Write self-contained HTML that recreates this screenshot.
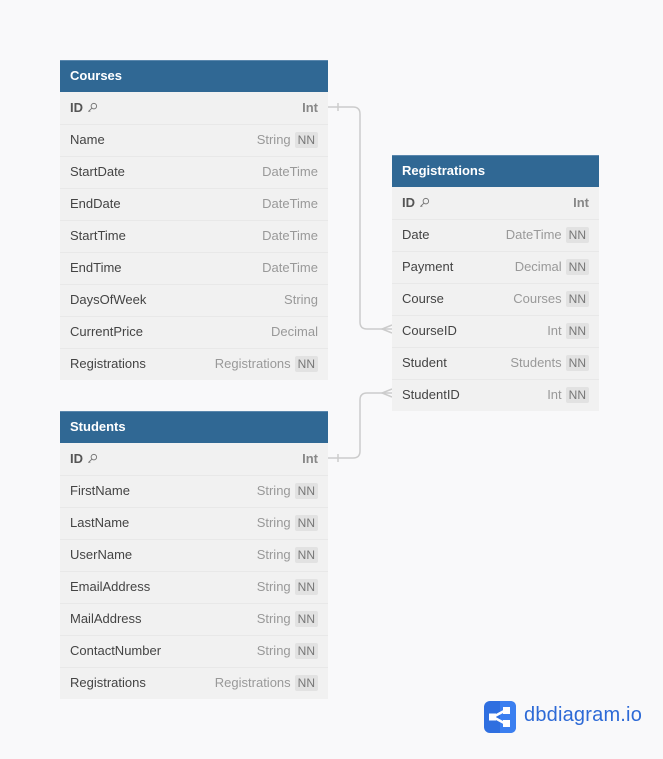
<!DOCTYPE html>
<html><head><meta charset="utf-8"><style>
body{margin:0;width:663px;height:759px;background:#f9f9fa;font-family:"Liberation Sans",sans-serif;position:relative;overflow:hidden}
.t{position:absolute;background:#f1f1f1}
.h{height:32px;background:#306894;color:#fff;font-weight:bold;font-size:13px;line-height:30px;padding-left:10px;box-sizing:border-box;border-top:1px solid #5a87ad}
.r{height:32px;border-top:1px solid #e8e8e8;box-sizing:border-box;display:flex;align-items:center;padding:0 10px 2px;font-size:13px;color:#444}
.h+.r{border-top:none}
.n{flex:1;display:flex;align-items:center}
.ty{color:#999}
.b{font-weight:bold;color:#555}
.nn{background:#e2e2e2;color:#777;padding:1px 3px;margin-left:4px;border-radius:2px;font-size:12px}
.k{margin-left:4px}
</style></head><body>
<svg width="663" height="759" style="position:absolute;left:0;top:0" fill="none" stroke="#ccc" stroke-width="1.5">
<path d="M328 107 H353 Q360 107 360 114 V322 Q360 329 367 329 H392"/>
<path d="M338 103 V111"/>
<path d="M392 325 L382 329 L392 333"/>
<path d="M328 458 H353 Q360 458 360 451 V400 Q360 393 367 393 H392"/>
<path d="M338 454 V462"/>
<path d="M392 389 L382 393 L392 397"/>
</svg>
<svg width="0" height="0" style="position:absolute"><defs><symbol id="key" viewBox="0 0 12 12"><circle cx="7.5" cy="4.5" r="3" fill="none" stroke="#777" stroke-width="1"/><path d="M5.3 6.7 L1.5 10.5 M2.5 9.5 L3.5 10.5" stroke="#777" stroke-width="1" fill="none"/></symbol></defs></svg>
<div class="t" style="left:60px;top:60px;width:268px">
<div class="h">Courses</div>
<div class="r"><span class="n b">ID<svg class="k" width="11" height="11"><use href="#key"/></svg></span><span class="b" style="color:#888">Int</span></div>
<div class="r"><span class="n">Name</span><span class="ty">String</span><span class="nn">NN</span></div>
<div class="r"><span class="n">StartDate</span><span class="ty">DateTime</span></div>
<div class="r"><span class="n">EndDate</span><span class="ty">DateTime</span></div>
<div class="r"><span class="n">StartTime</span><span class="ty">DateTime</span></div>
<div class="r"><span class="n">EndTime</span><span class="ty">DateTime</span></div>
<div class="r"><span class="n">DaysOfWeek</span><span class="ty">String</span></div>
<div class="r"><span class="n">CurrentPrice</span><span class="ty">Decimal</span></div>
<div class="r"><span class="n">Registrations</span><span class="ty">Registrations</span><span class="nn">NN</span></div>
</div>
<div class="t" style="left:60px;top:411px;width:268px">
<div class="h">Students</div>
<div class="r"><span class="n b">ID<svg class="k" width="11" height="11"><use href="#key"/></svg></span><span class="b" style="color:#888">Int</span></div>
<div class="r"><span class="n">FirstName</span><span class="ty">String</span><span class="nn">NN</span></div>
<div class="r"><span class="n">LastName</span><span class="ty">String</span><span class="nn">NN</span></div>
<div class="r"><span class="n">UserName</span><span class="ty">String</span><span class="nn">NN</span></div>
<div class="r"><span class="n">EmailAddress</span><span class="ty">String</span><span class="nn">NN</span></div>
<div class="r"><span class="n">MailAddress</span><span class="ty">String</span><span class="nn">NN</span></div>
<div class="r"><span class="n">ContactNumber</span><span class="ty">String</span><span class="nn">NN</span></div>
<div class="r"><span class="n">Registrations</span><span class="ty">Registrations</span><span class="nn">NN</span></div>
</div>
<div class="t" style="left:392px;top:155px;width:207px">
<div class="h">Registrations</div>
<div class="r"><span class="n b">ID<svg class="k" width="11" height="11"><use href="#key"/></svg></span><span class="b" style="color:#888">Int</span></div>
<div class="r"><span class="n">Date</span><span class="ty">DateTime</span><span class="nn">NN</span></div>
<div class="r"><span class="n">Payment</span><span class="ty">Decimal</span><span class="nn">NN</span></div>
<div class="r"><span class="n">Course</span><span class="ty">Courses</span><span class="nn">NN</span></div>
<div class="r"><span class="n">CourseID</span><span class="ty">Int</span><span class="nn">NN</span></div>
<div class="r"><span class="n">Student</span><span class="ty">Students</span><span class="nn">NN</span></div>
<div class="r"><span class="n">StudentID</span><span class="ty">Int</span><span class="nn">NN</span></div>
</div>
<svg width="32" height="32" style="position:absolute;left:484px;top:701px" viewBox="0 0 32 32">
<rect width="32" height="32" rx="6" fill="#2f6fe0"/>
<path d="M16 0 H26 Q32 0 32 6 V26 Q32 32 26 32 H16Z" fill="#3b7ff0"/>
<path d="M9 16 L22 9 M9 16 L22 23" stroke="#fff" stroke-width="2.5"/>
<rect x="5" y="12.5" width="7" height="7" fill="#fff"/>
<rect x="19" y="6" width="7" height="7" fill="#fff"/>
<rect x="19" y="19" width="7" height="7" fill="#fff"/>
</svg>
<div style="position:absolute;left:524px;top:704px;font-size:20px;color:#2d6ad6;letter-spacing:0.2px">dbdiagram.io</div>
</body></html>
